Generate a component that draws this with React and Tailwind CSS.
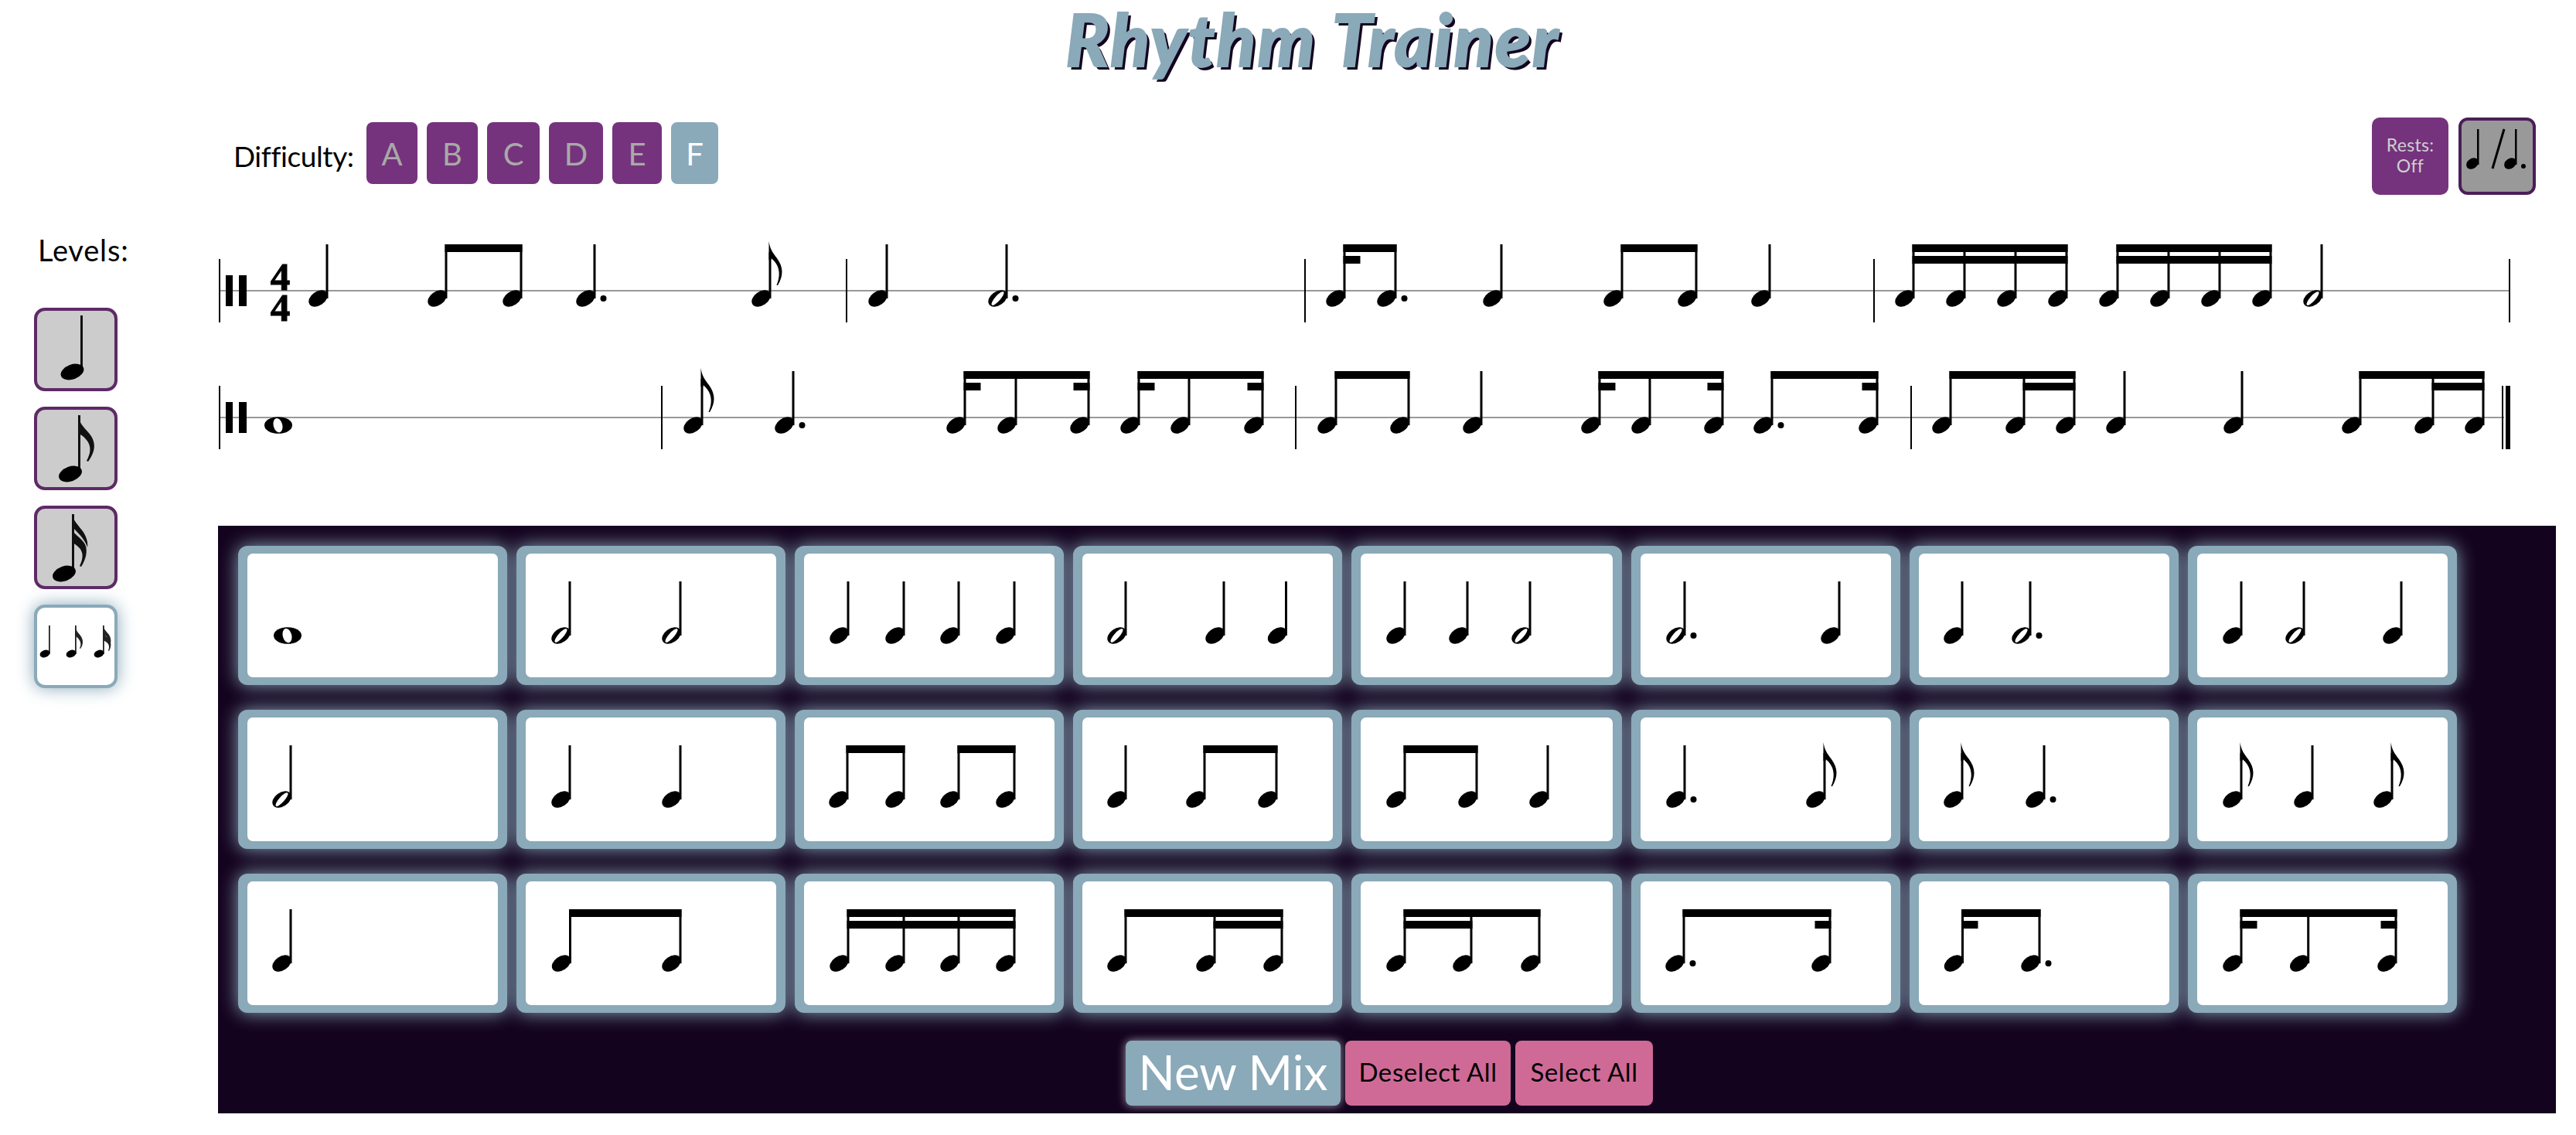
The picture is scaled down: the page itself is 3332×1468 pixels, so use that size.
import React from "react";

const FLAG = "M-1.5,-74 C0,-64 3,-60 9,-52 C17,-41 18,-30 10,-17 L8.5,-17 C14,-30 13,-43 1.5,-52 L1.5,-50 L-1.5,-50 Z";

function Note({ x, k = "q", dot, flag, cy }) {
  return (
    <g transform={`translate(${x},${cy})`}>
      <rect x={-1.5} y={flag ? -60 : -70} width={3} height={flag ? 60 : 70} fill="#000" />
      <ellipse cx={-11.5} cy={0} rx={13.5} ry={9} transform="rotate(-35 -11.5 0)" fill="#000" />
      {k === "h" && <ellipse cx={-11.5} cy={0} rx={11.5} ry={3.4} transform="rotate(-48 -11.5 0)" fill="#fff" />}
      {dot && <circle cx={11.5} cy={0} r={4} fill="#000" />}
      {flag && <path d={FLAG} fill="#000" />}
    </g>
  );
}

function Whole({ x, cy }) {
  return (
    <g transform={`translate(${x},${cy})`}>
      <ellipse cx={0} cy={0} rx={18} ry={10.8} fill="#000" />
      <ellipse cx={-0.5} cy={0} rx={5.8} ry={9.4} transform="rotate(-14)" fill="#fff" />
    </g>
  );
}

function Beam({ a, b, lvl = 0, cy }) {
  return <rect x={a - 1.5} y={cy - 70 + lvl * 15} width={b - a + 3} height={10} fill="#000" />;
}

function Music({ items, cy }) {
  return (
    <>
      {items.map((it, i) => {
        if (it.w !== undefined) return <Whole key={i} x={it.w} cy={cy} />;
        if (it.beam) return <Beam key={i} a={it.beam[0]} b={it.beam[1]} lvl={it.beam[2] || 0} cy={cy} />;
        return <Note key={i} {...it} cy={cy} />;
      })}
    </>
  );
}

const q = (x, dot) => ({ x, dot });
const h = (x, dot) => ({ x, k: "h", dot });
const f = (x) => ({ x, flag: true });
const bm = (a, b, lvl) => ({ beam: [a, b, lvl] });
const w = (x) => ({ w: x });
const qs = (...xs) => xs.map((x) => q(x));

const staff1 = [
  q(423), ...qs(577, 674), bm(577, 674), q(769, true), f(996),
  q(1147), h(1302, true),
  q(1739), q(1805, true), bm(1739, 1805), bm(1739, 1758, 1), q(1942), ...qs(2098, 2194), bm(2098, 2194), q(2289),
  ...qs(2475, 2541, 2607, 2673), bm(2475, 2673), bm(2475, 2673, 1),
  ...qs(2739, 2805, 2871, 2937), bm(2739, 2937), bm(2739, 2937, 1), h(3003),
];
const staff2 = [
  w(360),
  f(908), q(1026, true),
  ...qs(1248, 1314, 1408), bm(1248, 1408), bm(1248, 1267, 1), bm(1390, 1408, 1),
  ...qs(1473, 1538, 1633), bm(1473, 1633), bm(1473, 1492, 1), bm(1615, 1633, 1),
  ...qs(1728, 1822), bm(1728, 1822), q(1916),
  ...qs(2069, 2134, 2228), bm(2069, 2228), bm(2069, 2088, 1), bm(2210, 2228, 1),
  q(2292, true), q(2428), bm(2292, 2428), bm(2410, 2428, 1),
  ...qs(2523, 2618, 2683), bm(2523, 2683), bm(2618, 2683, 1), q(2748), q(2900),
  ...qs(3053, 3147, 3212), bm(3053, 3212), bm(3147, 3212, 1),
];

const rows = [
  [
    [w(64)],
    [h(69), h(212)],
    qs(69, 141, 212, 284),
    [h(68), q(195), q(275.5)],
    [q(69), q(150), h(231)],
    [h(69, true), q(269)],
    [q(68), h(156, true)],
    [q(69), h(150), q(276)],
  ],
  [
    [h(68)],
    qs(69, 212),
    [...qs(68, 141, 212, 284), bm(68, 141), bm(212, 284)],
    [q(68), ...qs(170, 263), bm(170, 263)],
    [...qs(69, 162), bm(69, 162), q(254)],
    [q(69, true), f(250)],
    [f(68), q(174, true)],
    [f(69), q(161), f(264)],
  ],
  [
    [q(68)],
    [...qs(69.5, 212), bm(69.5, 212)],
    [...qs(69, 141, 212, 284), bm(69, 284), bm(69, 284, 1)],
    [...qs(68, 183, 270), bm(68, 270), bm(183, 270, 1)],
    [...qs(69, 155, 243), bm(69, 243), bm(69, 155, 1)],
    [q(68, true), q(257), bm(68, 257), bm(239, 257, 1)],
    [q(68.5), q(168, true), bm(68.5, 168), bm(68.5, 87, 1)],
    [...qs(69, 155.7, 269), bm(69, 269), bm(69, 88, 1), bm(251, 269, 1)],
  ],
];

function Card({ items, wide }) {
  return (
    <div className={`${wide ? "w-[350px]" : "w-[348px]"} h-[180px] shrink-0 rounded-[12px] bg-[#8aa9b9] px-[12px] py-[10px] shadow-[0_0_25px_#8aa9b9]`}>
      <div className="h-full w-full overflow-hidden rounded-[7px] bg-white">
        <svg width="324" height="160" viewBox="12 10 324 160" className="block">
          <Music items={items} cy={116} />
        </svg>
      </div>
    </div>
  );
}

function Staff() {
  const bars1 = [1095, 1688, 2424, 3246];
  const bars2 = [856, 1676, 2472];
  return (
    <svg width="3024" height="428" viewBox="282 252 3024 428" className="block">
      <rect x={283} y={375} width={2964} height={2} fill="#999" />
      <rect x={283} y={539} width={2956} height={2} fill="#999" />
      {[[335, 356], [499, 520]].map(([top, b]) => (
        <g key={top}>
          <rect x={283} y={top} width={2} height={82} fill="#000" />
          <rect x={292} y={b} width={9} height={40} fill="#000" />
          <rect x={309} y={b} width={10} height={40} fill="#000" />
        </g>
      ))}
      {bars1.map((x) => <rect key={x} x={x - 1} y={335} width={2} height={82} fill="#000" />)}
      {bars2.map((x) => <rect key={x} x={x - 1} y={499} width={2} height={82} fill="#000" />)}
      <rect x={3236} y={499} width={2} height={82} fill="#000" />
      <rect x={3241} y={499} width={6} height={82} fill="#000" />
      <text x={362.5} y={375} textAnchor="middle" fontSize="51" fontWeight="700" stroke="#000" strokeWidth="1" fontFamily="'Liberation Serif',serif" fill="#000">4</text>
      <text x={362.5} y={415} textAnchor="middle" fontSize="51" fontWeight="700" stroke="#000" strokeWidth="1" fontFamily="'Liberation Serif',serif" fill="#000">4</text>
      <Music items={staff1} cy={386} />
      <Music items={staff2} cy={550} />
    </svg>
  );
}

function LevelButton({ active, children }) {
  return (
    <button className={`block h-[108px] w-[108px] overflow-hidden rounded-[14px] border-4 ${active ? "border-[#8aa9b9] bg-white shadow-[0_0_22px_#8aa9b9]" : "border-[#5d2a66] bg-[#cccccc]"}`}>
      <svg width="100" height="100" viewBox="0 0 100 100" className="block">{children}</svg>
    </button>
  );
}

function SmallNote({ x, flags = 0 }) {
  return (
    <g transform={`translate(${x},0)`}>
      <rect x={-1} y={23} width={1.8} height={37} fill="#222" />
      <ellipse cx={-6} cy={59.5} rx={6.6} ry={4.6} transform="rotate(-20 -6 59.5)" fill="#000" />
      {flags === 1 && <path d="M-1,22 C0,30 3,32 6,36 C10,41 10,48 6,53 L5,52.5 C8,47 6,41 -1,36 Z" fill="#222" />}
      {flags === 2 && <path d="M-1,22 C0,28 4,31 7,35 C9,38 10,42 9,46 C8,41 4,37 -1,33 Z M-1,31 C1,36 5,38 8,42 C10,46 10,51 7,56 L6,55.5 C8,51 7,47 4,45 C2,43 0,43 -1,41 Z" fill="#222" />}
    </g>
  );
}

function App() {
  const diff = [["A", 66], ["B", 66], ["C", 68], ["D", 70], ["E", 64], ["F", 61]];
  return (
    <div className="h-[1468px] w-[3332px] overflow-hidden bg-white font-['Lato',sans-serif] text-black">
      <div className="flex h-[152px] items-start justify-center pl-[64px]">
        <h1 className="m-0 text-[93px] font-black italic leading-[100px] tracking-[2.4px] text-[#8aa9b9] [-webkit-text-stroke:2px_#8aa9b9] [text-shadow:4px_4px_0_#14031f]">Rhythm Trainer</h1>
      </div>

      <div className="flex h-[100px] items-start pr-[52px]">
        <div className="ml-[302px] mt-[27px] w-[172px] text-[37px] leading-[46px] tracking-[-0.4px]">Difficulty:</div>
        <div className="mt-[6px] flex gap-[12px]">
          {diff.map(([l, wd]) => (
            <div
              key={l}
              style={{ width: wd }}
              className={`flex h-[80px] items-center justify-center rounded-[8px] pt-[2px] text-[40px] ${l === "F" ? "bg-[#8aa9b9] text-white" : "bg-[#75337d] text-[#a9a9a9]"}`}
            >
              {l}
            </div>
          ))}
        </div>
        <div className="ml-auto flex gap-[13px]">
          <div className="flex h-[100px] w-[99px] flex-col items-center justify-center rounded-[10px] bg-[#75337d] pb-[3px] text-[23px] leading-[27px] tracking-[0.3px] text-[#cfcfcf]">
            <span>Rests:</span>
            <span>Off</span>
          </div>
          <div className="h-[100px] w-[100px] overflow-hidden rounded-[12px] border-4 border-[#4a1e58] bg-[#999999]">
            <svg width="92" height="92" viewBox="3184 156 92 92" className="block">
              <rect x={3204} y={167} width={2.5} height={46} fill="#000" />
              <ellipse cx={3198} cy={211.5} rx={8.5} ry={6.5} transform="rotate(-35 3198 211.5)" fill="#000" />
              <line x1={3239} y1={167} x2={3224} y2={218} stroke="#000" strokeWidth={3} />
              <rect x={3253} y={167} width={2.5} height={46} fill="#000" />
              <ellipse cx={3247} cy={211.5} rx={8.5} ry={6.5} transform="rotate(-35 3247 211.5)" fill="#000" />
              <circle cx={3264} cy={215} r={3} fill="#000" />
            </svg>
          </div>
        </div>
      </div>

      <div className="flex">
        <div className="w-[282px] shrink-0 pl-[44px]">
          <div className="ml-[5px] mt-[48px] text-[38px] leading-[46px] tracking-[0.8px]">Levels:</div>
          <div className="mt-[52px] flex flex-col gap-[20px]">
            <LevelButton>
              <rect x={56} y={6} width={3} height={74} fill="#111" />
              <ellipse cx={45.5} cy={79} rx={15.5} ry={9.5} transform="rotate(-20 45.5 79)" fill="#000" />
            </LevelButton>
            <LevelButton>
              <rect x={53} y={7} width={3} height={76} fill="#111" />
              <ellipse cx={43} cy={83} rx={15.5} ry={9.5} transform="rotate(-20 43 83)" fill="#000" />
              <path d="M53,7 C55,18 60,22 66,29 C76,40 77,52 66,67 L64,66 C72,52 70,40 53,30 Z" fill="#111" />
            </LevelButton>
            <LevelButton>
              <rect x={45} y={7} width={3} height={77} fill="#111" />
              <ellipse cx={35} cy={84} rx={15.5} ry={9.5} transform="rotate(-20 35 84)" fill="#000" />
              <path d="M45,7 C47,16 54,22 59,29 C64,36 66,44 65,50 C63,42 56,34 46,24 Z" fill="#111" />
              <path d="M45,26 C48,34 58,38 62,46 C66,54 63,66 57,75 L55,74 C60,64 60,56 54,50 C50,46 47,45 45,42 Z" fill="#111" />
            </LevelButton>
            <LevelButton active>
              <SmallNote x={16} />
              <SmallNote x={50} flags={1} />
              <SmallNote x={86} flags={2} />
            </LevelButton>
          </div>
        </div>

        <div className="w-[3024px]">
          <Staff />
          <div className="h-[760px] bg-[#14031f] pl-[26px] pt-[26px]">
            <div className="flex flex-col gap-[32px]">
              {rows.map((row, r) => (
                <div key={r} className="flex gap-[12px]">
                  {row.map((items, c) => <Card key={c} items={items} wide={c === 4} />)}
                </div>
              ))}
            </div>
            <div className="ml-[1148px] mt-[36px] flex gap-[6px]">
              <button className="flex h-[84px] w-[278px] items-center justify-center rounded-[8px] bg-[#8aa9b9] pb-[4px] text-[62px] text-white shadow-[0_0_12px_rgba(255,255,255,0.6)]">New Mix</button>
              <button className="flex h-[84px] w-[214px] items-center justify-center rounded-[8px] bg-[#cf6a97] pb-[2px] text-[33px] tracking-[0.6px] text-black">Deselect All</button>
              <button className="flex h-[84px] w-[178px] items-center justify-center rounded-[8px] bg-[#cf6a97] pb-[2px] text-[33px] tracking-[0.6px] text-black">Select All</button>
            </div>
          </div>
        </div>
      </div>
    </div>
  );
}

export default App;
